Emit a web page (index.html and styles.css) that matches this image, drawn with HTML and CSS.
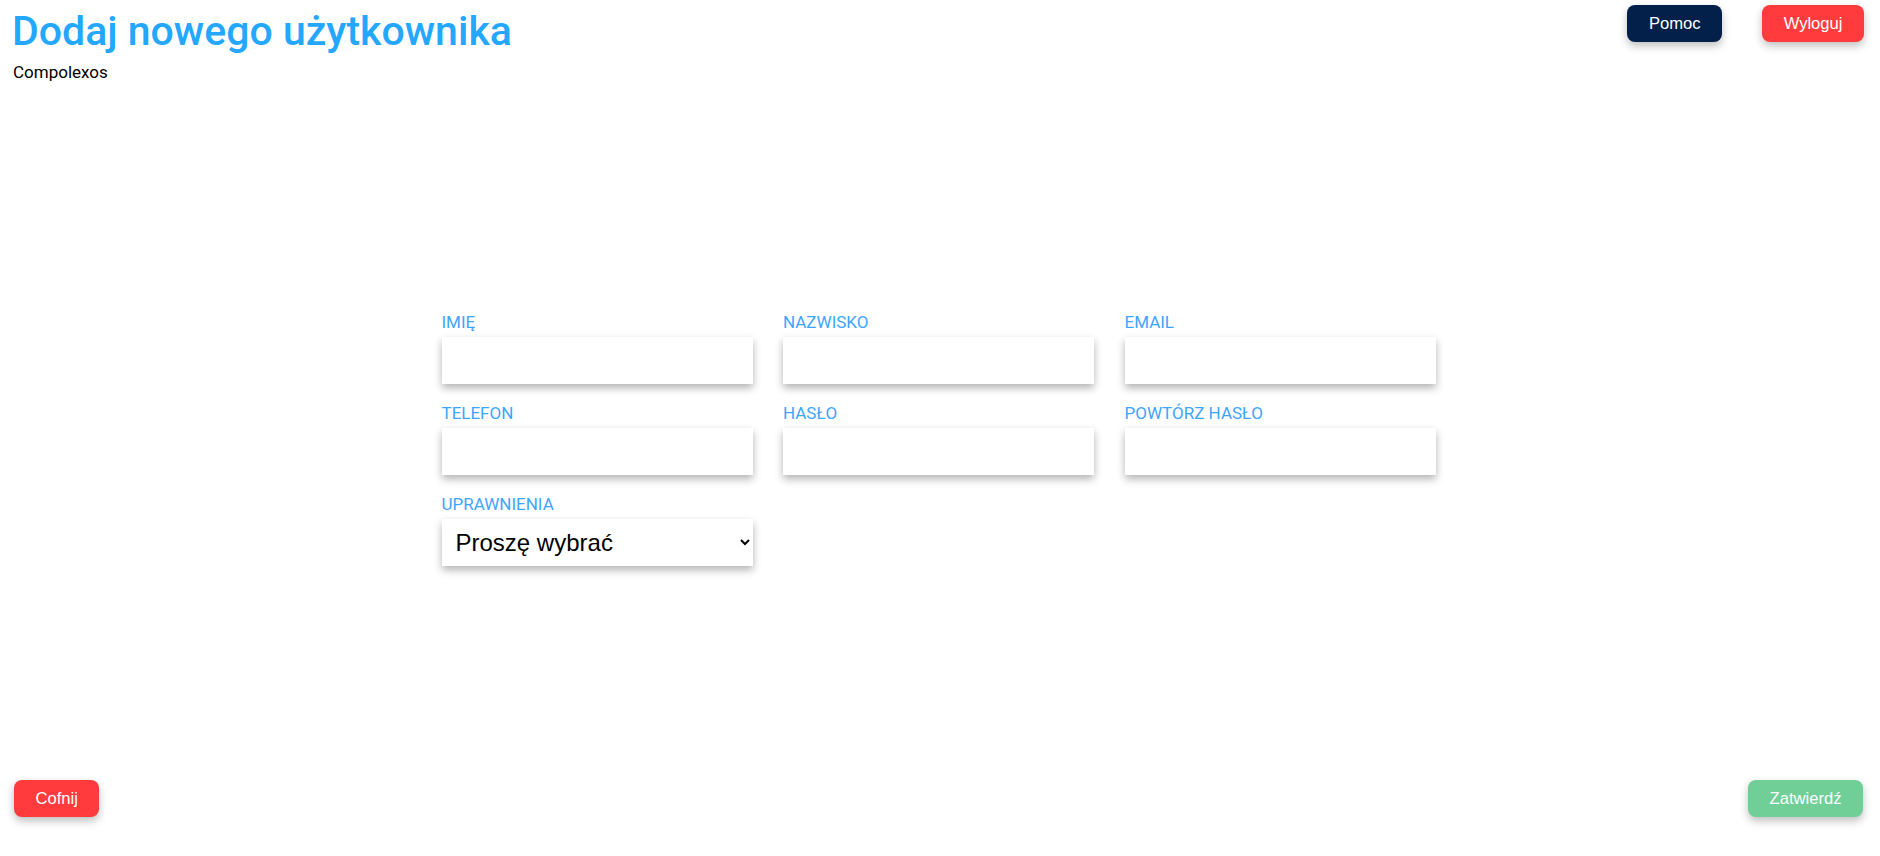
FILE: index.html
```html
<!DOCTYPE html>
<html lang="pl">
<head>
<meta charset="utf-8">
<title>Dodaj nowego użytkownika</title>
<link rel="stylesheet" href="styles.css">
</head>
<body>
<div class="page">
  <header class="header">
    <div class="brand">
      <h1 class="title">Dodaj nowego użytkownika</h1>
      <div class="company">Compolexos</div>
    </div>
    <div class="top-actions">
      <button class="btn btn-navy">Pomoc</button>
      <button class="btn btn-red">Wyloguj</button>
    </div>
  </header>
  <main class="main">
    <form class="form">
      <div class="field"><label class="label">IMIĘ</label><input class="input" type="text"></div>
      <div class="field"><label class="label">NAZWISKO</label><input class="input" type="text"></div>
      <div class="field"><label class="label">EMAIL</label><input class="input" type="email"></div>
      <div class="field"><label class="label">TELEFON</label><input class="input" type="tel"></div>
      <div class="field"><label class="label">HASŁO</label><input class="input" type="password"></div>
      <div class="field"><label class="label">POWTÓRZ HASŁO</label><input class="input" type="password"></div>
      <div class="field"><label class="label">UPRAWNIENIA</label>
        <select class="select"><option>Proszę wybrać</option></select>
      </div>
    </form>
  </main>
  <footer class="footer">
    <button class="btn btn-red">Cofnij</button>
    <button class="btn btn-green">Zatwierdź</button>
  </footer>
</div>
</body>
</html>
```
FILE: styles.css
```css
html, body {
  margin: 0;
  padding: 0;
  background: #ffffff;
}
body {
  font-family: Roboto, "Liberation Sans", sans-serif;
  color: #000;
}
.page {
  display: flex;
  flex-direction: column;
  height: 100vh;
  box-sizing: border-box;
}
.header {
  display: flex;
  justify-content: space-between;
  align-items: flex-start;
  padding: 0 16px 0 12px;
}
.title {
  margin: 8px 0 0 0;
  font-size: 41px;
  line-height: 47px;
  font-weight: 500;
  color: #24a7ff;
}
.company {
  margin-top: 7px;
  padding-left: 1px;
  font-size: 17px;
  line-height: 20px;
}
.top-actions {
  display: flex;
  gap: 40px;
  padding-top: 5px;
}
.btn {
  font-family: "Liberation Sans", Arial, sans-serif;
  font-size: 16.6px;
  line-height: 19px;
  padding: 9px 21.5px;
  border: none;
  border-radius: 8px;
  color: #ffffff;
  cursor: pointer;
  box-shadow: 0 4px 8px rgba(0, 0, 0, 0.25);
}
.btn-navy { background: #03204a; }
.btn-red { background: #ff3b3d; }
.btn-green { background: #6fcf97; }
.main {
  flex: 1;
  padding: 230px 3px 0 0;
}
.form {
  display: grid;
  grid-template-columns: repeat(3, 311px);
  column-gap: 30.5px;
  row-gap: 19px;
  justify-content: center;
  margin: 0;
}
.field {
  display: flex;
  flex-direction: column;
  gap: 5px;
}
.label {
  font-size: 17px;
  line-height: 20px;
  color: #3ea5ff;
}
.input, .select {
  box-sizing: border-box;
  width: 311px;
  height: 47px;
  border: none;
  background: #ffffff;
  box-shadow: 0 4px 8px rgba(0, 0, 0, 0.3);
  outline: none;
}
.select {
  font-family: "Liberation Sans", Arial, sans-serif;
  font-size: 24px;
  padding: 0 9px 0 10px;
  color: #000;
}
.footer {
  display: flex;
  justify-content: space-between;
  padding: 0 17px 39px 14px;
}
```
